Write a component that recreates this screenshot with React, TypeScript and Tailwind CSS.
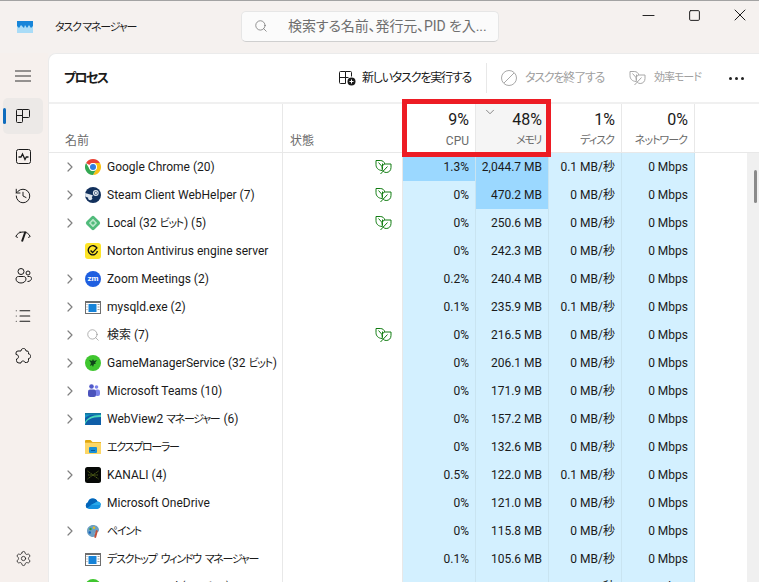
import React from 'react';
import { ChevronRight, ChevronDown, History, List, Search, Settings, Minus, Square, X } from 'lucide-react';

const Leaf = ({ className }: { className: string }) => (
  <svg width="17" height="16" viewBox="0 0 17 16" fill="none" stroke="currentColor" strokeWidth="1" className={className}>
    <path d="M7 11.5C3.2 11.2 1 9 1 5.5V1.5h4.200C7.800 1.500 9.400 3 9.800 5" />
    <path d="M7 8.500C7 6.300 8.700 5 10.800 5H16v3.500c0 3-2 5-4.800 5C8.800 13.500 7 11.500 7 8.500z" />
    <path d="M3.500 3.500L7.500 8v2.500M7.500 7V4.500M12.500 7.500L5.500 15" />
  </svg>
);

const ChromeIcon = () => (
  <svg width="16" height="16" viewBox="0 0 16 16">
    <path d="M8 0a8 8 0 0 1 6.930 4H8a4 4 0 0 0-3.460 2L1.070 4A8 8 0 0 1 8 0z" fill="#ea4335" />
    <path d="M14.930 4A8 8 0 0 1 8 16l3.460-6A4 4 0 0 0 8 4z" fill="#fbc116" />
    <path d="M1.070 4l3.470 6A4 4 0 0 0 8 12l3.460-2L8 16A8 8 0 0 1 1.070 4z" fill="#34a853" />
    <circle cx="8" cy="8" r="3.900" fill="#fff" />
    <circle cx="8" cy="8" r="3" fill="#2f7de1" />
  </svg>
);

const SteamIcon = () => (
  <svg width="16" height="16" viewBox="0 0 16 16">
    <circle cx="8" cy="8" r="8" fill="#12305c" />
    <path d="M0.200 9.600L5 11.500l3-2.800-1-.6L0 6z" fill="#dfe6ee" />
    <circle cx="5.200" cy="11.200" r="2" fill="#dfe6ee" />
    <circle cx="10.800" cy="6" r="2.900" fill="#dfe6ee" />
    <circle cx="10.800" cy="6" r="1.800" fill="#12305c" />
    <circle cx="10.800" cy="6" r="1.200" fill="#dfe6ee" />
  </svg>
);

const LocalIcon = () => (
  <svg width="16" height="16" viewBox="0 0 16 16">
    <rect x="2.400" y="2.400" width="11.200" height="11.200" rx="2" transform="rotate(45 8 8)" fill="#51bb7b" />
    <rect x="5" y="5" width="6" height="6" rx="0.500" transform="rotate(45 8 8)" fill="#b9e6c9" />
    <rect x="6.500" y="6.500" width="3" height="3" transform="rotate(45 8 8)" fill="#51bb7b" />
  </svg>
);

const NortonIcon = () => (
  <svg width="16" height="16" viewBox="0 0 16 16" fill="none">
    <rect width="16" height="16" rx="3" fill="#fde428" />
    <path d="M12 5.200A4.600 4.600 0 1 0 12.400 8" stroke="#111" strokeWidth="1.400" />
    <path d="M5.600 7.600l2 2 4.600-5" stroke="#111" strokeWidth="1.400" />
  </svg>
);

const ZoomIcon = () => (
  <div className="w-4 h-4 rounded-full bg-[#1f5fe0] flex items-center justify-center text-white text-[8px] leading-none font-bold">zm</div>
);

const WindowIcon = () => (
  <svg width="16" height="13" viewBox="0 0 16 13">
    <rect x="0.500" y="0.500" width="15" height="12" fill="#fff" stroke="#6e6e6e" />
    <rect x="0" y="0" width="16" height="2" fill="#6e6e6e" />
    <rect x="3.500" y="3" width="8" height="8" fill="#1683d8" />
    <path d="M1.500 3.500h1M1.500 6h1M1.500 8.500h1M12.500 3.500h2M12.500 6h2M12.500 8.500h2" stroke="#9a9a9a" />
  </svg>
);

const RazerIcon = () => (
  <svg width="16" height="16" viewBox="0 0 16 16">
    <circle cx="8" cy="8" r="8" fill="#3fc62f" />
    <path d="M4 5l3 1 1-2 1 2 3-1-2 3 1 1-2 0-1 3-1-2-2 1 1-3z" fill="#10461a" />
  </svg>
);

const TeamsIcon = () => (
  <svg width="16" height="16" viewBox="0 0 16 16">
    <circle cx="11.500" cy="4" r="1.800" fill="#7b83eb" />
    <circle cx="6.500" cy="3.500" r="2.300" fill="#5059c9" />
    <rect x="10" y="6.500" width="5" height="6.500" rx="2" fill="#7b83eb" />
    <rect x="3" y="6.500" width="8" height="7.500" rx="2" fill="#4b53bc" />
  </svg>
);

const WebViewIcon = () => (
  <svg width="16" height="12" viewBox="0 0 16 12">
    <rect width="16" height="12" fill="#0f5ea8" />
    <path d="M0 12V5c4-4 10-4 16-3V0H0z" fill="#1596c4" />
    <path d="M0 12c1-5 6-8 16-8V2C8 1.500 2 5 0 9z" fill="#49d8bc" />
    <rect width="16" height="1.500" fill="#12759f" />
  </svg>
);

const FolderIcon = () => (
  <svg width="16" height="14" viewBox="0 0 16 14">
    <path d="M0 1a1 1 0 0 1 1-1h4.500l2 2H0z" fill="#e0a80f" />
    <rect y="2" width="16" height="12" rx="0.500" fill="#fdd766" />
    <rect y="2" width="16" height="1" fill="#e9b42a" />
    <rect x="4" y="7" width="8" height="6" rx="1" fill="#1a8fd6" />
    <rect x="6" y="10" width="4" height="1" fill="#0b5c96" />
  </svg>
);

const KanaliIcon = () => (
  <svg width="16" height="16" viewBox="0 0 16 16" fill="none">
    <rect width="16" height="16" rx="2.500" fill="#060806" />
    <path d="M2.500 4L8 8l-5.500 4M13.500 4L8 8l5.500 4M3 8h10" stroke="#55651a" strokeWidth="1" strokeDasharray="1.500 .6" />
  </svg>
);

const OneDriveIcon = () => (
  <svg width="16" height="12" viewBox="0 0 16 12">
    <path d="M4 12A3.500 3.500 0 0 1 3 5.300 5 5 0 0 1 12.500 4.500 3.800 3.800 0 0 1 12.500 12z" fill="#1490df" />
    <path d="M3 5.300A5 5 0 0 1 12.500 4.500L6 8 2 11.200A3.500 3.500 0 0 1 3 5.300z" fill="#0364b8" />
    <path d="M6 8l6.500-3.500A3.800 3.800 0 0 1 16 8z" fill="#28a8ea" />
  </svg>
);

const PaintIcon = () => (
  <svg width="16" height="16" viewBox="0 0 16 16">
    <path d="M8 2c3.500 0 6 2.300 6 5 0 2-2 2.500-3 2.500s-1.500 1-1 2-.5 2.500-2 2.500C5 14 2 11.500 2 8s3-6 6-6z" fill="#6b9fc4" />
    <circle cx="5.500" cy="6" r="1.200" fill="#2ea043" />
    <circle cx="9" cy="4.800" r="1.200" fill="#e8b923" />
    <circle cx="4.800" cy="9.500" r="1.200" fill="#1565c0" />
    <rect x="10" y="7" width="2" height="8" rx="1" fill="#c0503c" transform="rotate(15 11 11)" />
  </svg>
);

const rows = [
  { name: 'Google Chrome (20)', icon: <ChromeIcon />, exp: true, leaf: true, cpu: '1.3%', mem: '2,044.7 MB', disk: '0.1 MB/秒', hotCpu: true, hotMem: true },
  { name: 'Steam Client WebHelper (7)', icon: <SteamIcon />, exp: true, leaf: true, cpu: '0%', mem: '470.2 MB', disk: '0 MB/秒', hotMem: true },
  { name: 'Local (32 ビット) (5)', icon: <LocalIcon />, exp: true, leaf: true, cpu: '0%', mem: '250.6 MB', disk: '0 MB/秒' },
  { name: 'Norton Antivirus engine server', icon: <NortonIcon />, cpu: '0%', mem: '242.3 MB', disk: '0 MB/秒' },
  { name: 'Zoom Meetings (2)', icon: <ZoomIcon />, exp: true, cpu: '0.2%', mem: '240.4 MB', disk: '0 MB/秒' },
  { name: 'mysqld.exe (2)', icon: <WindowIcon />, exp: true, cpu: '0.1%', mem: '235.9 MB', disk: '0.1 MB/秒' },
  { name: '検索 (7)', icon: <Search size={14} strokeWidth={1.2} className="text-[#909090]" />, exp: true, leaf: true, cpu: '0%', mem: '216.5 MB', disk: '0 MB/秒' },
  { name: 'GameManagerService (32 ビット)', icon: <RazerIcon />, exp: true, cpu: '0%', mem: '206.1 MB', disk: '0 MB/秒' },
  { name: 'Microsoft Teams (10)', icon: <TeamsIcon />, exp: true, cpu: '0%', mem: '171.9 MB', disk: '0 MB/秒' },
  { name: 'WebView2 マネージャー (6)', icon: <WebViewIcon />, exp: true, cpu: '0%', mem: '157.2 MB', disk: '0 MB/秒' },
  { name: 'エクスプローラー', icon: <FolderIcon />, cpu: '0%', mem: '132.6 MB', disk: '0 MB/秒' },
  { name: 'KANALI (4)', icon: <KanaliIcon />, exp: true, cpu: '0.5%', mem: '122.0 MB', disk: '0.1 MB/秒' },
  { name: 'Microsoft OneDrive', icon: <OneDriveIcon />, cpu: '0%', mem: '121.0 MB', disk: '0 MB/秒' },
  { name: 'ペイント', icon: <PaintIcon />, exp: true, cpu: '0%', mem: '115.8 MB', disk: '0 MB/秒' },
  { name: 'デスクトップ ウィンドウ マネージャー', icon: <WindowIcon />, cpu: '0.1%', mem: '105.6 MB', disk: '0 MB/秒' },
  { name: 'Razer Central (32 ビット)', icon: <RazerIcon />, exp: true, cpu: '0%', mem: '98.3 MB', disk: '0 MB/秒' },
];

// katakana runs are set smaller and tighter than the rest of a name
const RowName = ({ name }: { name: string }) => (
  <span className="ml-[6px]">
    {name.split(/([\u30a0-\u30ff]+)/).map((part, i) =>
      i % 2 === 1 ? <span key={i} className="text-[11px] tracking-[-1.3px] mr-[1px]">{part}</span> : part
    )}
  </span>
);

const navIcon = 'w-10 h-9 flex items-center justify-center text-[#1a1a1a]';
const colTitle = 'text-[#6b6b6b] mt-[3px] leading-[16px] whitespace-nowrap';
const colPct = 'text-[16px] leading-[20px]';

const App: React.FC = () => {
  return (
    <div className="w-[759px] h-[582px] overflow-hidden relative flex flex-col bg-[#f5f1ef] border-t border-[#a3a3a3] text-[12px] text-[#1a1a1a] [font-feature-settings:'palt'] font-['Roboto','Noto_Sans_CJK_JP',sans-serif]">
      {/* title bar */}
      <div className="h-[52px] shrink-0 flex items-center">
        <div className="w-[55px] pl-[17px] shrink-0">
          <svg width="16" height="12" viewBox="0 0 16 12">
            <rect width="16" height="12" fill="#a9dcf7" />
            <path d="M0 0h16v5l-2 2-2-3-2 3-2-3-1 3-3-3-2 3-2-2z" fill="#1685d9" />
          </svg>
        </div>
        <span className="w-[186px] shrink-0 leading-none whitespace-nowrap text-[11px] tracking-[-1.2px]">タスク マネージャー</span>
        <div className="w-[258px] h-[31px] -mt-[2px] shrink-0 flex items-center bg-[#fbfbfb] border border-[#e6e6e6] border-b-[#cfcfcf] rounded-[5px]">
          <Search size={14} strokeWidth={1.2} className="ml-[12px] text-[#666]" />
          <span className="ml-[20px] text-[14px] text-[#6f6f6f] whitespace-nowrap tracking-[-0.1px]">検索する名前、発行元、PID を入...</span>
        </div>
        <div className="ml-auto flex items-center -mt-[24px]">
          <Minus size={19} strokeWidth={1.2} className="mr-[30px]" />
          <Square size={13} strokeWidth={1.8} className="mr-[29px]" />
          <X size={20} strokeWidth={1.2} className="mr-[9px]" />
        </div>
      </div>

      <div className="flex-1 flex min-h-0">
        {/* side nav */}
        <div className="w-12 shrink-0 bg-[#f6f0ed] flex flex-col pt-[5px] pb-[6px] pl-[3px]">
          <div className="flex flex-col gap-1">
            <div className={navIcon}>
              <svg width="16" height="12" viewBox="0 0 16 12" fill="none" stroke="#333" strokeWidth="1"><path d="M0 1h16M0 6h16M0 11h16" /></svg>
            </div>
            <div className="w-10 h-9 relative flex items-center justify-center bg-[#ece9e7] rounded-[5px]">
              <div className="absolute left-0 top-[10px] w-[3px] h-4 rounded-full bg-[#0f6cbd]" />
              <svg width="14" height="14" viewBox="0 0 14 14" fill="none" stroke="#1a1a1a" strokeWidth="1">
                <path d="M6.500.5h-5a1 1 0 0 0-1 1v11a1 1 0 0 0 1 1h4a1 1 0 0 0 1-1V.5h6a1 1 0 0 1 1 1v6a1 1 0 0 1-1 1h-6M.5 6.500h6" />
              </svg>
            </div>
            <div className={navIcon}>
              <svg width="15" height="15" viewBox="0 0 15 15" fill="none" stroke="#1a1a1a" strokeWidth="1">
                <rect x=".5" y=".5" width="14" height="14" rx="2" />
                <path d="M2.500 8H5l1.500-3L9 10.500 10.300 8h2.200" strokeWidth="1.300" />
              </svg>
            </div>
            <div className={navIcon}><History size={18} strokeWidth={1.3} /></div>
            <div className={navIcon}>
              <svg width="16" height="14" viewBox="0 0 16 14" fill="none" stroke="#1a1a1a" strokeWidth="1">
                <path d="M.8 7.500A8 8 0 0 1 15.200 7.500M.8 7.500l2 1M15.200 7.500l-2 1M5 2.500l.7 1.500" />
                <path d="M10.500 2.500L7 12.500" strokeWidth="2" />
              </svg>
            </div>
            <div className={navIcon}>
              <svg width="17" height="16" viewBox="0 0 17 16" fill="none" stroke="#1a1a1a" strokeWidth="1">
                <circle cx="6" cy="3.500" r="3" />
                <path d="M1 11c0-1.500 1-2.500 2.500-2.500h5c1.500 0 2.500 1 2.500 2.500 0 2.500-2.500 4-5 4S1 13.500 1 11z" />
                <circle cx="13" cy="5" r="2" />
                <path d="M12.500 8.500h2c1 0 2 .8 2 2 0 1.800-1.800 3-4 3" />
              </svg>
            </div>
            <div className={navIcon}><List size={18} strokeWidth={1.4} /></div>
            <div className={navIcon}>
              <svg width="16" height="16" viewBox="0 0 16 16" fill="none" stroke="#1a1a1a" strokeWidth="1">
                <path d="M6 3C6 1.400 7.200.5 8.500.5S11 1.400 11 3h1a1.500 1.500 0 0 1 1.500 1.500V6C15 6 15.700 7 15.700 8.200S15 10.500 13.500 10.500v2a2 2 0 0 1-2 2H10C10 13.500 9 13 8 13s-2 .5-2 2H4a2.500 2.500 0 0 1-2.500-2.500V11C2.500 11 3.500 10 3.500 8.800S2.500 6.500 1 6.500V5a2 2 0 0 1 2-2z" />
              </svg>
            </div>
          </div>
          <div className={`${navIcon} mt-auto`}><Settings size={17} strokeWidth={1.1} /></div>
        </div>

        {/* main panel */}
        <div className="flex-1 min-w-0 flex flex-col bg-white rounded-tl-[8px] border-t border-l border-[#ebebeb]">
          <div className="h-[48px] shrink-0 flex items-center pl-[15px] whitespace-nowrap">
            <span className="text-[13px] font-bold w-[275px] shrink-0 tracking-[-1.6px]">プロセス</span>
            <svg width="17" height="15" viewBox="0 0 17 15" fill="none" stroke="#1a1a1a" strokeWidth="1" className="shrink-0">
              <path d="M6.500.5h-5a1 1 0 0 0-1 1v10a1 1 0 0 0 1 1h5zM6.500 .5h5a1 1 0 0 1 1 1v4M.5 6.500h9" />
              <circle cx="12.500" cy="10.500" r="4" fill="#1a1a1a" stroke="none" />
              <path d="M12.500 8.500v4M10.500 10.500h4" stroke="#fff" />
            </svg>
            <span className="ml-[6px] w-[124px] shrink-0 tracking-[-1.2px]">新しいタスクを実行する</span>
            <div className="w-px h-[30px] bg-[#e8e8e8] shrink-0" />
            <svg width="16" height="16" viewBox="0 0 16 16" fill="none" stroke="#a8a8a8" strokeWidth="1" className="ml-[14px] shrink-0">
              <circle cx="8" cy="8" r="7.500" />
              <path d="M13 3L3 13" />
            </svg>
            <span className="ml-[8px] w-[104px] shrink-0 text-[#a0a0a0] tracking-[-1.2px]">タスクを終了する</span>
            <Leaf className="text-[#a8a8a8] shrink-0" />
            <span className="ml-[8px] text-[#a0a0a0] w-[75px] shrink-0 text-[11px] tracking-[-1px]">効率モード</span>
            <div className="flex gap-[3px] shrink-0">
              <div className="w-[3px] h-[3px] rounded-full bg-[#222]" />
              <div className="w-[3px] h-[3px] rounded-full bg-[#222]" />
              <div className="w-[3px] h-[3px] rounded-full bg-[#222]" />
            </div>
          </div>
          <div className="h-[2px] shrink-0 bg-[#f0f0f0]" />

          {/* column header */}
          <div className="h-[49px] shrink-0 grid grid-cols-[234px_120px_73px_73px_73px_73px] border-b border-[#e8e8e8]">
            <div className="border-r border-[#e8e8e8] flex items-end pl-[16px] pb-[3px] leading-[16px] text-[#6b6b6b]">名前</div>
            <div className="border-r border-[#e8e8e8] flex items-end pl-[7px] pb-[3px] leading-[16px] text-[#6b6b6b]">状態</div>
            <div className="border-r border-[#e8e8e8] flex flex-col items-end pr-[6px] pb-[3px] justify-end">
              <span className={colPct}>9%</span>
              <span className={colTitle}>CPU</span>
            </div>
            <div className="relative border-r border-[#e8e8e8] bg-[#f5f5f5] flex flex-col items-end pr-[6px] pb-[3px] justify-end">
              <ChevronDown size={14} strokeWidth={1.3} className="absolute left-[7px] top-[1px] text-[#666]" />
              <span className={colPct}>48%</span>
              <span className={`${colTitle} text-[11px] tracking-[-1.4px] pr-[1px]`}>メモリ</span>
            </div>
            <div className="border-r border-[#e8e8e8] flex flex-col items-end pr-[6px] pb-[3px] justify-end">
              <span className={colPct}>1%</span>
              <span className={`${colTitle} text-[11px] tracking-[-1px] pr-[1px]`}>ディスク</span>
            </div>
            <div className="border-r border-[#e8e8e8] flex flex-col items-end pr-[6px] pb-[3px] justify-end">
              <span className={colPct}>0%</span>
              <span className={`${colTitle} text-[11px] tracking-[-1px] pr-[1px]`}>ネットワーク</span>
            </div>
          </div>

          <div className="flex-1 flex min-h-0 overflow-hidden">
            <div className="w-[698px] shrink-0">
              {rows.map((r) => (
                <div key={r.name} className="h-[28px] grid grid-cols-[234px_120px_73px_73px_73px_73px] whitespace-nowrap">
                  <div className="border-r border-[#e8e8e8] flex items-center">
                    <div className="w-[36px] shrink-0 flex justify-end pr-[7px]">
                      {r.exp && <ChevronRight size={16} strokeWidth={1.8} className="text-[#808080]" />}
                    </div>
                    <div className="w-4 shrink-0 flex justify-center">{r.icon}</div>
                    <RowName name={r.name} />
                  </div>
                  <div className="border-r border-[#e8e8e8] flex items-center justify-end pr-[10px]">
                    {r.leaf && <Leaf className="text-[#107c10]" />}
                  </div>
                  <div className={`border-r border-[#c9e4f1] flex items-center justify-end pr-[6px] ${r.hotCpu ? 'bg-[#9bd8ff]' : 'bg-[#d3f0ff]'}`}>{r.cpu}</div>
                  <div className={`border-r border-[#c9e4f1] flex items-center justify-end pr-[6px] ${r.hotMem ? 'bg-[#9bd8ff]' : 'bg-[#d3f0ff]'}`}>{r.mem}</div>
                  <div className="border-r border-[#c9e4f1] flex items-center justify-end pr-[6px] bg-[#d3f0ff]">{r.disk}</div>
                  <div className="border-r border-[#c9e4f1] flex items-center justify-end pr-[6px] bg-[#d3f0ff]">0 Mbps</div>
                </div>
              ))}
            </div>
            <div className="ml-auto w-3 shrink-0 bg-[#f0f0f0] pt-[17px] pl-[7px]">
              <div className="w-[3px] h-[33px] rounded-full bg-[#8a8a8a]" />
            </div>
          </div>
        </div>
      </div>

      {/* red annotation around CPU and memory */}
      <div className="absolute left-[402px] top-[98px] w-[149px] h-[58px] border-[5px] border-[#ed1c24] pointer-events-none" />
    </div>
  );
};

export default App;
